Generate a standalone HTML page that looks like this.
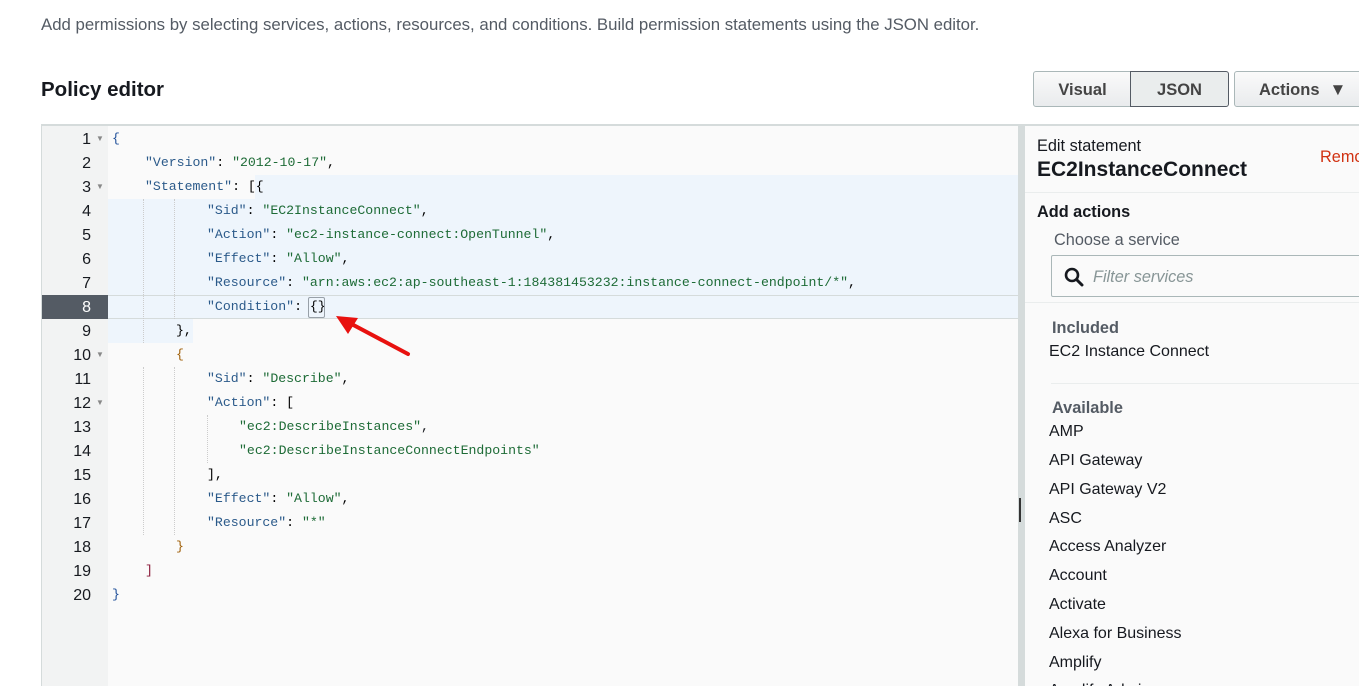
<!DOCTYPE html><html style="overflow:hidden;height:686px"><head><style>
body{margin:0;width:1359px;height:686px;overflow:hidden;background:#fff;font-family:"Liberation Sans",sans-serif;position:relative}
.a{position:absolute}
.code{font-family:"Liberation Mono",monospace;font-size:13.2px;white-space:pre;line-height:24px}
.k{color:#2b5a8a}.s{color:#1d6b36}.p{color:#16191f}
.ln{position:absolute;left:41px;width:50px;text-align:right;font-size:16px;color:#16191f;line-height:24px;top:1px}
.tri{position:absolute;left:96px;font-size:8px;color:#888;line-height:24px}
.li{position:absolute;left:1049px;font-size:16px;color:#16191f}
.g{position:absolute;border-left:1px dotted #ccc;height:24px}
</style></head><body>
<div class="a" style="left:41px;top:15px;font-size:16.8px;color:#545b64">Add permissions by selecting services, actions, resources, and conditions. Build permission statements using the JSON editor.</div>
<div class="a" style="left:41px;top:78px;font-size:20.5px;font-weight:bold;color:#16191f">Policy editor</div>
<div class="a" style="left:1033px;top:71px;width:97px;height:34px;border:1px solid #aab7b8;border-radius:3px 0 0 3px;background:linear-gradient(#fafafa,#e9ebed);text-align:center;line-height:36px;font-weight:bold;font-size:16.5px;color:#444">Visual</div>
<div class="a" style="left:1130px;top:71px;width:97px;height:34px;border:1px solid #545b64;border-radius:0 3px 3px 0;background:#eaeded;text-align:center;line-height:36px;font-weight:bold;font-size:16.5px;color:#444">JSON</div>
<div class="a" style="left:1234px;top:71px;width:140px;height:34px;border:1px solid #aab7b8;border-radius:3px;background:linear-gradient(#fafafa,#e9ebed);line-height:36px;font-weight:bold;font-size:16.5px;color:#444"><span style="margin-left:24px">Actions</span><span style="margin-left:10px;font-size:17px">▼</span></div>
<div class="a" style="left:41px;top:124px;width:1318px;height:562px;border-top:2px solid #d5dbdb;border-left:1px solid #d5dbdb;background:#fafafa"></div>
<div class="a" style="left:42px;top:126px;width:66px;height:560px;background:#f2f3f3"></div>
<div class="a" style="left:255px;top:175px;width:763px;height:24px;background:#eef5fc"></div>
<div class="a" style="left:108px;top:199px;width:910px;height:120px;background:#eef5fc"></div>
<div class="a" style="left:108px;top:319px;width:85px;height:24px;background:#eef5fc"></div>
<div class="a" style="left:108px;top:295px;width:910px;height:22px;border-top:1px solid #d5dbdb;border-bottom:1px solid #d5dbdb"></div>
<div class="a" style="left:42px;top:295px;width:66px;height:24px;background:#545b64"></div>
<div class="a" style="left:1018px;top:126px;width:7px;height:560px;background:#d5dbdb"></div>
<div class="a" style="left:1019px;top:498px;width:2px;height:24px;background:#333"></div>
<div class="ln" style="top:128px">1</div><div class="tri" style="top:127px">▼</div>
<div class="ln" style="top:152px">2</div>
<div class="ln" style="top:176px">3</div><div class="tri" style="top:175px">▼</div>
<div class="ln" style="top:200px">4</div><div class="ln" style="top:224px">5</div><div class="ln" style="top:248px">6</div><div class="ln" style="top:272px">7</div>
<div class="ln" style="top:296px;color:#fff">8</div><div class="ln" style="top:320px">9</div>
<div class="ln" style="top:344px">10</div><div class="tri" style="top:343px">▼</div>
<div class="ln" style="top:368px">11</div>
<div class="ln" style="top:392px">12</div><div class="tri" style="top:391px">▼</div>
<div class="ln" style="top:416px">13</div><div class="ln" style="top:440px">14</div><div class="ln" style="top:464px">15</div><div class="ln" style="top:488px">16</div><div class="ln" style="top:512px">17</div><div class="ln" style="top:536px">18</div><div class="ln" style="top:560px">19</div><div class="ln" style="top:584px">20</div>
<div class="g" style="left:143px;top:199px;height:144px"></div><div class="g" style="left:174px;top:199px;height:120px"></div>
<div class="g" style="left:143px;top:367px;height:168px"></div><div class="g" style="left:174px;top:367px;height:168px"></div><div class="g" style="left:207px;top:415px;height:48px"></div>
<div class="a code" style="left:112px;top:127px;color:#1f4f99">{</div>
<div class="a code" style="left:145px;top:151px"><span class="k">"Version"</span>: <span class="s">"2012-10-17"</span>,</div>
<div class="a code" style="left:145px;top:175px"><span class="k">"Statement"</span>: [{</div>
<div class="a code" style="left:207px;top:199px"><span class="k">"Sid"</span>: <span class="s">"EC2InstanceConnect"</span>,</div>
<div class="a code" style="left:207px;top:223px"><span class="k">"Action"</span>: <span class="s">"ec2-instance-connect:OpenTunnel"</span>,</div>
<div class="a code" style="left:207px;top:247px"><span class="k">"Effect"</span>: <span class="s">"Allow"</span>,</div>
<div class="a code" style="left:207px;top:271px"><span class="k">"Resource"</span>: <span class="s">"arn:aws:ec2:ap-southeast-1:184381453232:instance-connect-endpoint/*"</span>,</div>
<div class="a code" style="left:207px;top:295px"><span class="k">"Condition"</span>: {}</div>
<div class="a" style="left:308px;top:297px;width:15px;height:19px;border:1px solid #98a0a8;border-radius:2px"></div>
<div class="a code" style="left:176px;top:319px">},</div>
<div class="a code" style="left:176px;top:343px;color:#a0600a">{</div>
<div class="a code" style="left:207px;top:367px"><span class="k">"Sid"</span>: <span class="s">"Describe"</span>,</div>
<div class="a code" style="left:207px;top:391px"><span class="k">"Action"</span>: [</div>
<div class="a code s" style="left:239px;top:415px">"ec2:DescribeInstances"<span class="p">,</span></div>
<div class="a code s" style="left:239px;top:439px">"ec2:DescribeInstanceConnectEndpoints"</div>
<div class="a code" style="left:207px;top:463px">],</div>
<div class="a code" style="left:207px;top:487px"><span class="k">"Effect"</span>: <span class="s">"Allow"</span>,</div>
<div class="a code" style="left:207px;top:511px"><span class="k">"Resource"</span>: <span class="s">"*"</span></div>
<div class="a code" style="left:176px;top:535px;color:#a0600a">}</div>
<div class="a code" style="left:145px;top:559px;color:#8b1a3a">]</div>
<div class="a code" style="left:112px;top:583px;color:#1f4f99">}</div>
<svg class="a" style="left:330px;top:310px" width="90" height="50"><line x1="78" y1="44" x2="14" y2="10" stroke="#e8110f" stroke-width="4" stroke-linecap="round"/><polygon points="6,6 28,8 18,24" fill="#e8110f"/></svg>
<div class="a" style="left:1025px;top:126px;width:334px;height:66px;background:#fafafa;border-bottom:1px solid #eaeded"></div>
<div class="a" style="left:1037px;top:137px;font-size:16.3px;color:#16191f">Edit statement</div>
<div class="a" style="left:1037px;top:158px;font-size:21px;font-weight:bold;color:#16191f">EC2InstanceConnect</div>
<div class="a" style="left:1320px;top:148px;font-size:16.3px;color:#d13212">Remove</div>
<div class="a" style="left:1037px;top:203px;font-size:16.3px;font-weight:bold;color:#16191f">Add actions</div>
<div class="a" style="left:1054px;top:231px;font-size:16.3px;color:#545b64">Choose a service</div>
<div class="a" style="left:1051px;top:255px;width:320px;height:40px;border:1px solid #aab7b8;border-radius:2px"></div>
<svg class="a" style="left:1064px;top:267px" width="20" height="20"><circle cx="8" cy="8" r="6" fill="none" stroke="#16191f" stroke-width="2.6"/><line x1="12.5" y1="12.5" x2="18" y2="18" stroke="#16191f" stroke-width="3" stroke-linecap="round"/></svg>
<div class="a" style="left:1093px;top:268px;font-size:16.3px;font-style:italic;color:#879596">Filter services</div>
<div class="a" style="left:1025px;top:302px;width:334px;height:1px;background:#eaeded"></div>
<div class="a" style="left:1052px;top:319px;font-size:16.3px;font-weight:bold;color:#545b64">Included</div>
<div class="li" style="top:343px">EC2 Instance Connect</div>
<div class="a" style="left:1051px;top:383px;width:308px;height:1px;background:#eaeded"></div>
<div class="a" style="left:1052px;top:399px;font-size:16.3px;font-weight:bold;color:#545b64">Available</div>
<div class="li" style="top:423px">AMP</div><div class="li" style="top:452px">API Gateway</div><div class="li" style="top:481px">API Gateway V2</div><div class="li" style="top:510px">ASC</div><div class="li" style="top:538px">Access Analyzer</div><div class="li" style="top:567px">Account</div><div class="li" style="top:596px">Activate</div><div class="li" style="top:625px">Alexa for Business</div><div class="li" style="top:654px">Amplify</div><div class="li" style="top:682px">Amplify Admin</div>
</body></html>
